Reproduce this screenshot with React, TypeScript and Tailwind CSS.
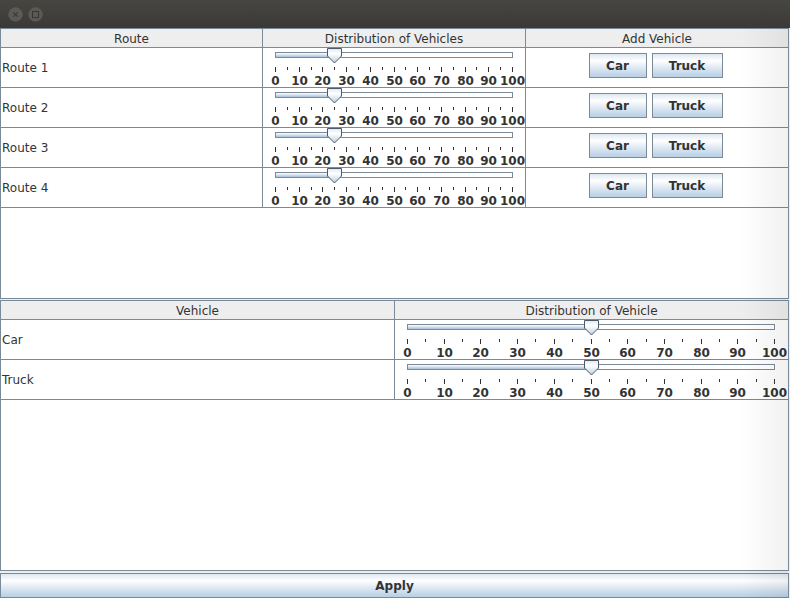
import React from 'react';

const routes = ['Route 1', 'Route 2', 'Route 3', 'Route 4'];
const vehicles = ['Car', 'Truck'];

const oceanGradient =
  'bg-[linear-gradient(180deg,#dde8f3_0%,#ffffff_30%,#dde8f3_60%,#b8cfe5_100%)]';

function TitleBar() {
  return (
    <div className="h-[28px] bg-[linear-gradient(180deg,#474642,#3a3935)] flex items-center pl-[8px] gap-[5px]">
      <svg width="15" height="15" viewBox="0 0 15 15">
        <circle cx="7.5" cy="7.5" r="7.2" fill="#5b5a55" />
        <path d="M5.3 5.3 L9.7 9.7 M9.7 5.3 L5.3 9.7" stroke="#393834" strokeWidth="1.1" />
      </svg>
      <svg width="15" height="15" viewBox="0 0 15 15">
        <circle cx="7.5" cy="7.5" r="7.2" fill="#5b5a55" />
        <rect x="4.5" y="4.5" width="6" height="6" fill="none" stroke="#393834" strokeWidth="1.1" />
      </svg>
    </div>
  );
}

function Slider({ len, value }: { len: number; value: number }) {
  const tx = Math.round((value / 100) * len) + 0.5;
  const ticks = Array.from({ length: 21 }, (_, i) => i);
  const labels = Array.from({ length: 11 }, (_, i) => i);
  return (
    <div className="relative h-[39px]" style={{ width: len + 2 }}>
      <svg className="absolute left-0 top-0 overflow-visible" width={len + 2} height="26">
        <defs>
          <linearGradient id="fill" x1="0" y1="0" x2="0" y2="1">
            <stop offset="0" stopColor="#ffffff" />
            <stop offset="1" stopColor="#a9c0d8" />
          </linearGradient>
          <linearGradient id="thumb" x1="0" y1="0" x2="0" y2="1">
            <stop offset="0" stopColor="#dde8f3" />
            <stop offset="0.35" stopColor="#ffffff" />
            <stop offset="1" stopColor="#b8cfe5" />
          </linearGradient>
        </defs>
        <rect x="0.5" y="4.5" width={len} height="5" fill="#ffffff" stroke="#7a8a99" />
        <rect x="1" y="5" width={tx - 1} height="4" fill="url(#fill)" />
        <path
          d={`M${tx - 7} 0.5 H${tx + 7} V8 L${tx} 15 L${tx - 7} 8 Z`}
          fill="url(#thumb)"
          stroke="#4d5966"
        />
        {ticks.map((i) => {
          const x = Math.round((i * len) / 20) + 0.5;
          return (
            <line key={i} x1={x} x2={x} y1="19" y2={i % 2 === 0 ? 24 : 22} stroke="#333333" />
          );
        })}
      </svg>
      {labels.map((i) => (
        <span
          key={i}
          className="absolute top-[26px] -translate-x-1/2 text-[12px] leading-[14px] font-bold text-[#333333]"
          style={{ left: Math.round((i * len) / 10) + 0.5 }}
        >
          {i * 10}
        </span>
      ))}
    </div>
  );
}

function HeaderCell({ children, className = '' }: { children: React.ReactNode; className?: string }) {
  return (
    <div className={`h-[18px] pt-[1px] flex items-center justify-center bg-[#eeeeee] ${className}`}>
      {children}
    </div>
  );
}

function Button({ label, width }: { label: string; width: string }) {
  return (
    <div
      className={`${width} h-[25px] flex items-center justify-center border border-[#7a8a99] ${oceanGradient} font-bold text-[12px] text-[#333333]`}
    >
      {label}
    </div>
  );
}

export default function App() {
  return (
    <div className="relative w-[790px] h-[598px] bg-[#eeeeee] overflow-hidden font-['DejaVu_Sans',sans-serif] text-[12px] text-[#333333]">
      <TitleBar />

      {/* Routes table */}
      <div className="h-[271px] w-[789px] border border-[#7a8a99] bg-white">
        <div className="flex border-b border-[#7a8a99]">
          <HeaderCell className="w-[262px] border-r border-[#7a8a99]">Route</HeaderCell>
          <HeaderCell className="w-[263px] border-r border-[#7a8a99]">Distribution of Vehicles</HeaderCell>
          <HeaderCell className="flex-1">Add Vehicle</HeaderCell>
        </div>
        {routes.map((r) => (
          <div key={r} className="flex h-[40px] border-b border-[#7a8a99]">
            <div className="w-[262px] border-r border-[#7a8a99] flex items-center pl-[1px]">{r}</div>
            <div className="w-[263px] border-r border-[#7a8a99] pl-[12px] overflow-hidden">
              <Slider len={237} value={25} />
            </div>
            <div className="flex-1 flex justify-center gap-[5px] pt-[5px] pr-[3px]">
              <Button label="Car" width="w-[58px]" />
              <Button label="Truck" width="w-[71px]" />
            </div>
          </div>
        ))}
      </div>

      {/* Vehicles table */}
      <div className="mt-[1px] h-[271px] w-[789px] border border-[#7a8a99] bg-white">
        <div className="flex border-b border-[#7a8a99]">
          <HeaderCell className="w-[394px] border-r border-[#7a8a99]">Vehicle</HeaderCell>
          <HeaderCell className="flex-1">Distribution of Vehicle</HeaderCell>
        </div>
        {vehicles.map((v) => (
          <div key={v} className="flex h-[40px] border-b border-[#7a8a99]">
            <div className="w-[394px] border-r border-[#7a8a99] flex items-center pl-[1px]">{v}</div>
            <div className="flex-1 pl-[12px] overflow-hidden">
              <Slider len={367} value={50} />
            </div>
          </div>
        ))}
      </div>

      <div
        className={`mt-[2px] h-[25px] w-[789px] flex items-center justify-center border border-[#7a8a99] ${oceanGradient} font-bold text-[12px] text-[#333333]`}
      >
        Apply
      </div>

      {/* window edge shading */}
      <div className="pointer-events-none absolute right-[2px] top-[28px] bottom-0 w-[48px] bg-[linear-gradient(90deg,rgba(0,0,0,0),rgba(0,0,0,0.055))]" />
    </div>
  );
}
